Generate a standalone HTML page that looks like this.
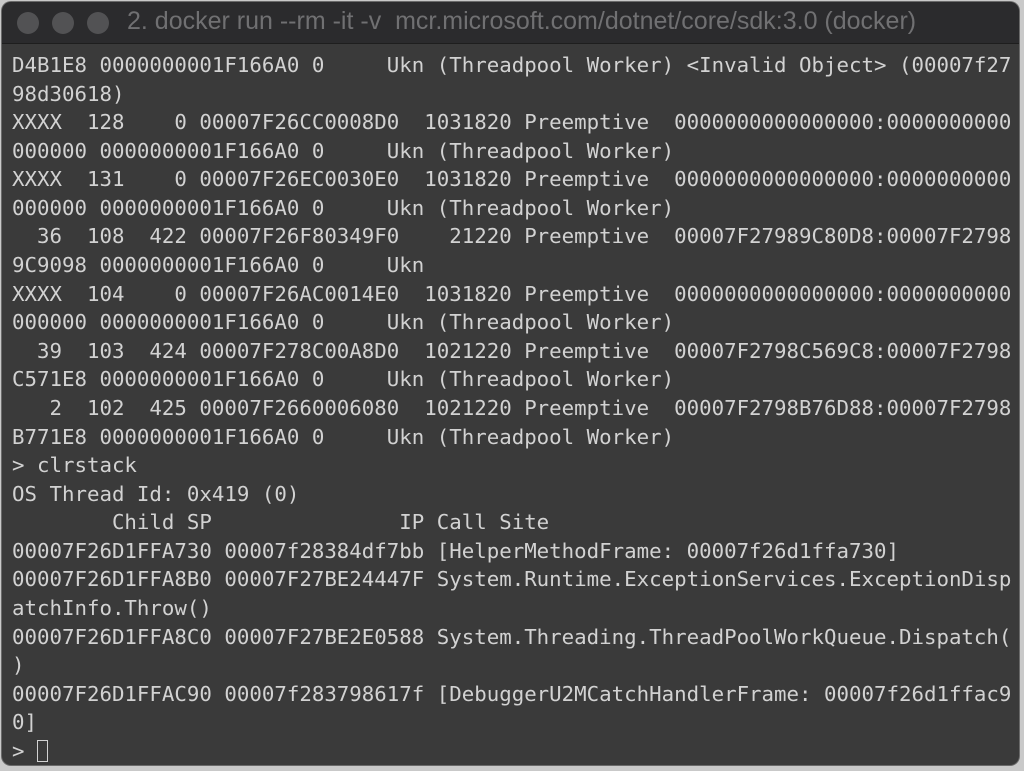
<!DOCTYPE html>
<html><head><meta charset="utf-8"><style>
html,body{margin:0;padding:0;width:1024px;height:771px;overflow:hidden;background:#c9c9c9;}
.win{position:absolute;left:2px;top:2px;width:1017px;height:763px;border-radius:9px;background:#3a3a3a;overflow:hidden;box-shadow:0 0 0 1px #6a6a6a;}
.tb{position:absolute;left:0;top:0;width:100%;height:41px;background:#2b2b2d;border-bottom:1px solid #1e1e1e;}
.dot{position:absolute;top:10px;width:22px;height:22px;border-radius:50%;background:#525254;}
.title{position:absolute;left:125px;top:5px;font:25px "Liberation Sans",sans-serif;color:#707072;white-space:nowrap;}
pre{position:absolute;left:10px;top:49px;margin:0;font-family:"DejaVu Sans Mono","Liberation Mono",monospace;font-size:20.75px;line-height:28.58px;color:#d2d2d2;}
.cur{display:inline-block;width:11px;height:22px;border:1.5px solid #d2d2d2;vertical-align:-4px;box-sizing:border-box;}
</style></head><body>
<div class="win">
<div class="tb"><div class="dot" style="left:15px"></div><div class="dot" style="left:50px"></div><div class="dot" style="left:85px"></div>
<div class="title">2. docker run --rm -it -v &nbsp;mcr.microsoft.com/dotnet/core/sdk:3.0 (docker)</div></div>
<pre>D4B1E8 0000000001F166A0 0     Ukn (Threadpool Worker) &lt;Invalid Object&gt; (00007f27
98d30618)
XXXX  128    0 00007F26CC0008D0  1031820 Preemptive  0000000000000000:0000000000
000000 0000000001F166A0 0     Ukn (Threadpool Worker)
XXXX  131    0 00007F26EC0030E0  1031820 Preemptive  0000000000000000:0000000000
000000 0000000001F166A0 0     Ukn (Threadpool Worker)
  36  108  422 00007F26F80349F0    21220 Preemptive  00007F27989C80D8:00007F2798
9C9098 0000000001F166A0 0     Ukn
XXXX  104    0 00007F26AC0014E0  1031820 Preemptive  0000000000000000:0000000000
000000 0000000001F166A0 0     Ukn (Threadpool Worker)
  39  103  424 00007F278C00A8D0  1021220 Preemptive  00007F2798C569C8:00007F2798
C571E8 0000000001F166A0 0     Ukn (Threadpool Worker)
   2  102  425 00007F2660006080  1021220 Preemptive  00007F2798B76D88:00007F2798
B771E8 0000000001F166A0 0     Ukn (Threadpool Worker)
&gt; clrstack
OS Thread Id: 0x419 (0)
        Child SP               IP Call Site
00007F26D1FFA730 00007f28384df7bb [HelperMethodFrame: 00007f26d1ffa730]
00007F26D1FFA8B0 00007F27BE24447F System.Runtime.ExceptionServices.ExceptionDisp
atchInfo.Throw()
00007F26D1FFA8C0 00007F27BE2E0588 System.Threading.ThreadPoolWorkQueue.Dispatch(
)
00007F26D1FFAC90 00007f283798617f [DebuggerU2MCatchHandlerFrame: 00007f26d1ffac9
0]
&gt; <span class="cur"></span></pre>
</div>
</body></html>
